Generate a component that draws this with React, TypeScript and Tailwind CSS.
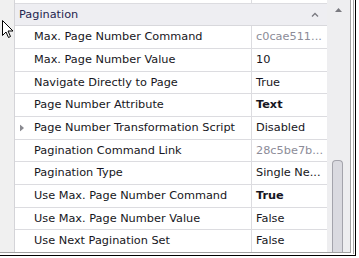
import React from "react";

type Row = { label: string; value: string; kind?: "gray" | "bold" | "normal"; expand?: boolean; h: number };

const rows: Row[] = [
  { label: "Max. Page Number Command", value: "c0cae511...", kind: "gray", h: 23 },
  { label: "Max. Page Number Value", value: "10", h: 23 },
  { label: "Navigate Directly to Page", value: "True", h: 22 },
  { label: "Page Number Attribute", value: "Text", kind: "bold", h: 23 },
  { label: "Page Number Transformation Script", value: "Disabled", expand: true, h: 23 },
  { label: "Pagination Command Link", value: "28c5be7b...", kind: "gray", h: 22 },
  { label: "Pagination Type", value: "Single Ne...", h: 23 },
  { label: "Use Max. Page Number Command", value: "True", kind: "bold", h: 23 },
  { label: "Use Max. Page Number Value", value: "False", h: 22 },
  { label: "Use Next Pagination Set", value: "False", h: 23 },
];

export default function App() {
  return (
    <div
      className="w-[359px] h-[258px] bg-white relative overflow-hidden"
      style={{ fontFamily: '"DejaVu Sans", sans-serif' }}
    >
      <div className="w-[356px] h-[256px] border-r border-b border-black">
        <div className="w-[354px] h-[254px] border-r border-[#a8a8a8]">
          <div className="w-[351px] h-[253px] border-r border-b border-[#a0a0a0] flex overflow-hidden">
            {/* gutter */}
            <div className="w-[15px] shrink-0 bg-[#f0f0f0] border-r border-[#d4d4d8]" />
            {/* grid */}
            <div className="w-[312px] shrink-0 flex flex-col text-[11.3px] text-[#161622]">
              <div className="h-[4px] shrink-0 flex border-b border-[#dcdce0]">
                <div className="w-[237px] border-r border-[#dcdce0]" />
              </div>
              <div className="h-[22px] shrink-0 flex items-center justify-between bg-[#eeeef2] border-b border-[#d8d8dc] pl-[4px] pr-[8px] pt-[1px]">
                <span className="text-[#25254f]">Pagination</span>
                <svg width="8" height="6" viewBox="0 0 8 6">
                  <polyline points="1,4.5 4,1.5 7,4.5" fill="none" stroke="#7a7a80" strokeWidth="1.3" />
                </svg>
              </div>
              {rows.map((r) => (
                <div
                  key={r.label}
                  className="shrink-0 flex border-b border-[#dcdce0]"
                  style={{ height: r.h }}
                >
                  <div className="w-[237px] shrink-0 border-r border-[#dcdce0] flex items-center relative pl-[19px] pt-[1px] whitespace-nowrap overflow-hidden">
                    {r.expand && (
                      <svg className="absolute left-[5px] top-1/2 -translate-y-1/2" width="4" height="7" viewBox="0 0 4 7">
                        <polygon points="0,0 4,3.5 0,7" fill="#8a8a90" />
                      </svg>
                    )}
                    <span>{r.label}</span>
                  </div>
                  <div
                    className={
                      "flex-1 flex items-center pl-[4px] pt-[1px] whitespace-nowrap overflow-hidden " +
                      (r.kind === "gray"
                        ? "text-[#8c8c98]"
                        : r.kind === "bold"
                        ? "font-bold text-[#161622]"
                        : "text-[#161622]")
                    }
                  >
                    {r.value}
                  </div>
                </div>
              ))}
            </div>
            {/* scrollbar */}
            <div className="w-[23px] shrink-0 bg-[#eeeef0] flex flex-col items-start">
              <div className="h-[20px] w-full flex items-center pl-[8px]">
                <svg width="7" height="4" viewBox="0 0 7 4">
                  <polygon points="0,4 3.5,0 7,4" fill="#7a7a80" />
                </svg>
              </div>
              <div className="flex-1" />
              <div className="ml-[5px] w-[11px] h-[92px] rounded-t-[4px] bg-[#dadae0] border border-[#a4a4ac] border-b-0" />
            </div>
          </div>
        </div>
      </div>
      {/* mouse cursor */}
      <svg className="absolute left-[2px] top-[20px]" width="12" height="19" viewBox="0 0 12 19">
        <path
          d="M0.5 0.5 L0.5 15.5 L4 12 L6.5 17.5 L8.5 16.5 L6 11 L11 11 Z"
          fill="#ffffff"
          stroke="#000000"
          strokeWidth="1"
          strokeLinejoin="miter"
        />
      </svg>
    </div>
  );
}
